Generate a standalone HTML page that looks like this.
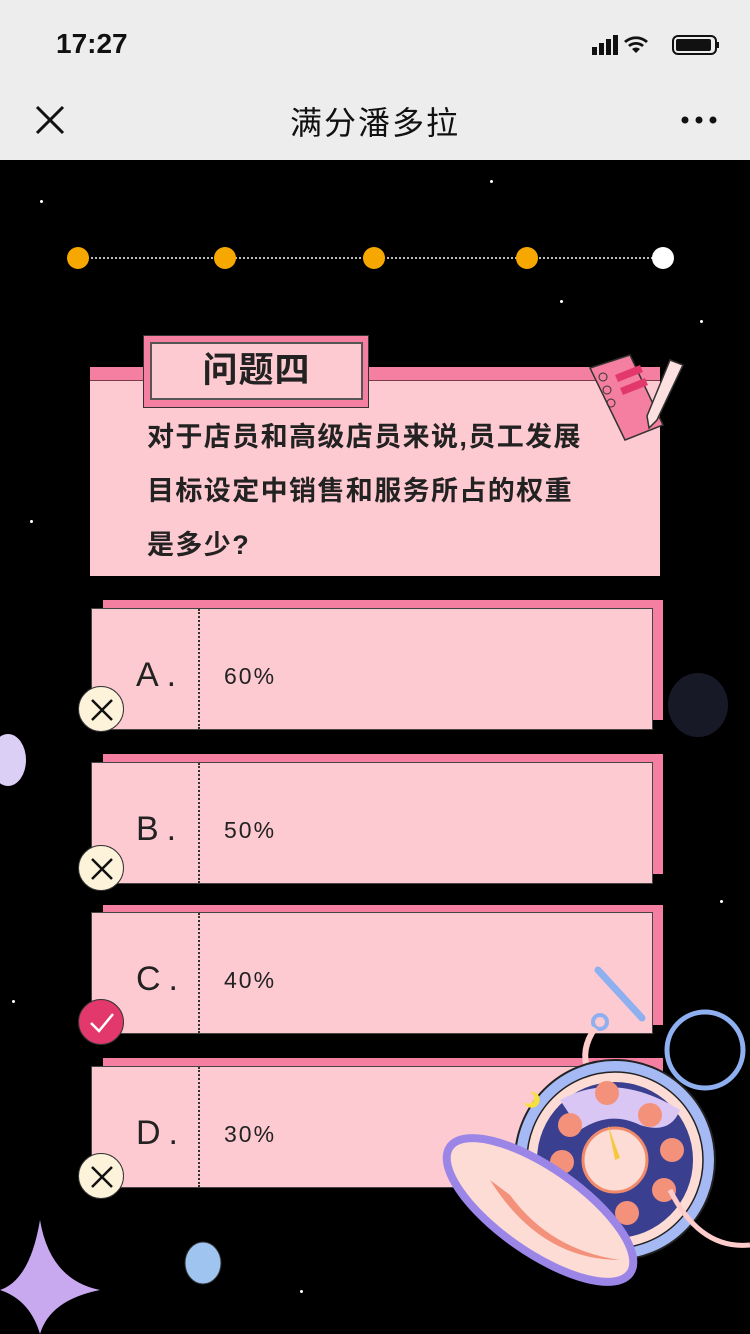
<!DOCTYPE html>
<html><head><meta charset="utf-8"><style>
*{margin:0;padding:0;box-sizing:border-box}
body{width:750px;height:1334px;overflow:hidden;background:#000;font-family:"Liberation Sans","Noto Sans CJK SC",sans-serif;position:relative}
.abs{position:absolute}
.sb{left:0;top:0;width:750px;height:160px;background:#ededed}
.time{left:56px;top:28px;font-size:28px;font-weight:600;color:#111}
.title{left:0;width:750px;top:100px;text-align:center;font-size:32px;color:#111;letter-spacing:2px}
.dot{width:22px;height:22px;border-radius:50%;background:#f7a800;top:247px}
.line{top:257px;left:80px;width:580px;border-top:2px dotted #bbb}
.qbox{left:90px;top:367px;width:570px;height:209px;background:#fecad1}
.qstrip{left:90px;top:367px;width:570px;height:14px;background:#f47fa0;border-bottom:1px solid #7a3a48}
.tbox{left:143px;top:335px;width:226px;height:73px;background:#f47fa0;border:1px solid #333}
.tin{left:150px;top:342px;width:213px;height:58px;background:#fecad1;border:2px solid #555;text-align:center;font-size:35px;font-weight:bold;line-height:54px;color:#222;letter-spacing:1px}
.qt{left:147px;top:410px;width:520px;font-size:27px;font-weight:bold;line-height:54px;color:#222;letter-spacing:1.4px;white-space:nowrap}
.back{left:103px;width:560px;height:120px;background:#f47fa0}
.card{left:91px;width:562px;height:122px;background:#fecad1;border:1px solid #444}
.card .l{position:absolute;left:44px;top:0;line-height:132px;font-size:34px;color:#222;letter-spacing:8px}
.card .v{position:absolute;left:132px;top:4px;line-height:126px;font-size:23px;color:#222;letter-spacing:2px}
.card .d{position:absolute;left:106px;top:0;height:120px;border-left:2px dotted #333}
.ic{width:46px;height:46px;border-radius:50%;background:#fdf3da;border:1px solid #333}
.ok{background:#e2386c}
.st{width:3px;height:3px;background:#fff;border-radius:50%}
</style></head><body>
<div class="abs sb"></div>
<div class="abs time">17:27</div>
<svg class="abs" style="left:590px;top:33px" width="130" height="24"><rect x="2" y="14" width="5" height="8" fill="#111"/><rect x="9" y="10" width="5" height="12" fill="#111"/><rect x="16" y="6" width="5" height="16" fill="#111"/><rect x="23" y="2" width="5" height="20" fill="#111"/><path d="M46 20 l-4 -4 a6 6 0 0 1 8 0z M38 12 a12 12 0 0 1 16 0 l-2 2 a9 9 0 0 0 -12 0z M34 8 a18 18 0 0 1 24 0 l-2 2 a15 15 0 0 0 -20 0z" fill="#111"/><rect x="83" y="3" width="43" height="18" rx="5" fill="none" stroke="#111" stroke-width="2"/><rect x="86" y="6" width="35" height="12" rx="2" fill="#111"/><rect x="127" y="9" width="2" height="6" fill="#111"/></svg>
<svg class="abs" style="left:34px;top:104px" width="32" height="32"><path d="M3 3L29 29M29 3L3 29" stroke="#111" stroke-width="3"/></svg>
<div class="abs title" style="top:98px">满分潘多拉</div>
<svg class="abs" style="left:680px;top:114px" width="40" height="12"><circle cx="5" cy="6" r="3.5" fill="#111"/><circle cx="19" cy="6" r="3.5" fill="#111"/><circle cx="33" cy="6" r="3.5" fill="#111"/></svg>

<div class="abs st" style="left:40px;top:200px"></div><div class="abs st" style="left:490px;top:180px"></div><div class="abs st" style="left:700px;top:320px"></div><div class="abs st" style="left:30px;top:520px"></div><div class="abs st" style="left:12px;top:1000px"></div><div class="abs st" style="left:560px;top:300px"></div><div class="abs st" style="left:720px;top:900px"></div><div class="abs st" style="left:300px;top:1290px"></div>

<div class="abs line"></div>
<div class="abs dot" style="left:67px"></div><div class="abs dot" style="left:214px"></div><div class="abs dot" style="left:363px"></div><div class="abs dot" style="left:516px"></div><div class="abs dot" style="left:652px;background:#fff"></div>

<div class="abs qbox"></div><div class="abs qstrip"></div>
<div class="abs tbox"></div><div class="abs tin">问题四</div>
<div class="abs qt">对于店员和高级店员来说,员工发展<br>目标设定中销售和服务所占的权重<br>是多少?</div>
<svg class="abs" style="left:585px;top:350px" width="105" height="100"><path d="M5 18 L45 5 L78 75 L40 90Z" fill="#f47fa0" stroke="#333" stroke-width="1.5"/><circle cx="18" cy="27" r="4" fill="none" stroke="#333"/><circle cx="22" cy="40" r="4" fill="none" stroke="#333"/><circle cx="26" cy="53" r="4" fill="none" stroke="#333"/><path d="M30 25 L55 15 L58 22 L33 32Z M35 38 L60 28 L63 35 L38 45Z" fill="#e2386c"/><path d="M85 10 L98 15 L72 70 L64 78 L62 66Z" fill="#fde0e0" stroke="#333" stroke-width="1.5"/></svg>

<div class="abs back" style="top:600px"></div><div class="abs card" style="top:608px"><span class="l">A.</span><span class="d"></span><span class="v">60%</span></div>
<div class="abs back" style="top:754px"></div><div class="abs card" style="top:762px"><span class="l">B.</span><span class="d"></span><span class="v">50%</span></div>
<div class="abs back" style="top:905px"></div><div class="abs card" style="top:912px"><span class="l">C.</span><span class="d"></span><span class="v">40%</span></div>
<div class="abs back" style="top:1058px"></div><div class="abs card" style="top:1066px"><span class="l">D.</span><span class="d"></span><span class="v">30%</span></div>

<svg class="abs ic" style="left:78px;top:686px" width="46" height="46"><path d="M13 13L33 33M33 13L13 33" stroke="#111" stroke-width="2.5"/></svg>
<svg class="abs ic" style="left:78px;top:845px" width="46" height="46"><path d="M13 13L33 33M33 13L13 33" stroke="#111" stroke-width="2.5"/></svg>
<svg class="abs ic ok" style="left:78px;top:999px" width="46" height="46"><path d="M12 23L20 31L34 14" stroke="#fff" stroke-width="2.5" fill="none"/></svg>
<svg class="abs ic" style="left:78px;top:1153px" width="46" height="46"><path d="M13 13L33 33M33 13L13 33" stroke="#111" stroke-width="2.5"/></svg>

<svg class="abs" style="left:440px;top:960px" width="310" height="374">
<path d="M158 10 L202 58" stroke="#8fb0f0" stroke-width="7" stroke-linecap="round"/>
<circle cx="160" cy="62" r="7" fill="none" stroke="#8fb0f0" stroke-width="4"/>
<path d="M155 68 Q140 90 148 110" stroke="#fcc" stroke-width="6" fill="none"/>
<circle cx="265" cy="90" r="38" fill="none" stroke="#8fb0f0" stroke-width="5"/>
<circle cx="175" cy="200" r="100" fill="#a5b9f5" stroke="#222" stroke-width="2"/>
<circle cx="175" cy="200" r="88" fill="#fddcd5" stroke="#222" stroke-width="1.5"/>
<circle cx="175" cy="200" r="78" fill="#3a3f8f"/>
<path d="M120 140 Q175 110 240 150 Q230 175 200 165 Q170 150 140 170Z" fill="#d9c6f5"/>
<circle cx="175" cy="200" r="32" fill="#fddcd5" stroke="#f08a6a" stroke-width="3"/>
<circle cx="167" cy="133" r="12" fill="#f4917a"/><circle cx="210" cy="155" r="12" fill="#f4917a"/><circle cx="232" cy="190" r="12" fill="#f4917a"/><circle cx="224" cy="230" r="12" fill="#f4917a"/><circle cx="187" cy="253" r="12" fill="#f4917a"/><circle cx="130" cy="165" r="12" fill="#f4917a"/><circle cx="122" cy="202" r="12" fill="#f4917a"/>
<path d="M175 200 L168 165 L180 198Z" fill="#f5c842"/>
<ellipse cx="100" cy="250" rx="110" ry="42" transform="rotate(35 100 250)" fill="#fddcd5" stroke="#9b86e8" stroke-width="8"/>
<path d="M50 220 Q100 300 180 300 Q110 290 70 235Z" fill="#f4917a"/>
<path d="M230 230 Q260 290 310 285" stroke="#fcc" stroke-width="5" fill="none"/>
<path d="M84 142 a8 8 0 1 0 6 -10 a6 6 0 1 1 -6 10z" fill="#f5e040"/>
</svg>
<svg class="abs" style="left:0;top:1210px" width="110" height="124"><path d="M40 10 Q50 70 100 80 Q50 90 40 124 Q30 90 0 80 Q30 70 40 10Z" fill="#c8a9f0"/></svg>
<svg class="abs" style="left:0;top:730px" width="30" height="60"><ellipse cx="8" cy="30" rx="18" ry="26" fill="#dccff5"/></svg>
<svg class="abs" style="left:180px;top:1240px" width="46" height="46"><ellipse cx="23" cy="23" rx="18" ry="21" fill="#9fc4f0" stroke="#333"/></svg>
<svg class="abs" style="left:660px;top:660px" width="80" height="90"><ellipse cx="38" cy="45" rx="30" ry="32" fill="#2a2f45" opacity=".55"/></svg>
</body></html>
